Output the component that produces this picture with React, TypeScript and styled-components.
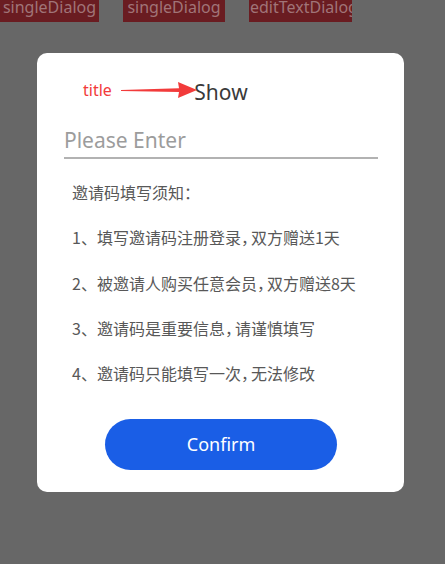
import React from "react";
import styled, { createGlobalStyle } from "styled-components";

const Global = createGlobalStyle`
  html, body {
    margin: 0;
    padding: 0;
    background: #676767;
    height: 100%;
    overflow: hidden;
  }
  body {
    font-family: "Noto Sans", "Noto Sans CJK SC", sans-serif;
  }
`;

const Page = styled.div`
  width: 445px;
  height: 564px;
  background: #676767;
  display: flex;
  flex-direction: column;
`;

const TopBar = styled.div`
  display: flex;
  gap: 24px;
  height: 22px;
`;

const TopButton = styled.div<{ $w: number; $align: string }>`
  width: ${(p) => p.$w}px;
  height: 22px;
  background: #6a1c21;
  color: #a07478;
  font-size: 16px;
  line-height: 14px;
  overflow: hidden;
  white-space: nowrap;
  text-align: ${(p) => p.$align};
  padding: 0 1px;
  box-sizing: border-box;
`;

const Dialog = styled.div`
  margin: 31px 0 0 37px;
  width: 367px;
  background: #ffffff;
  border-radius: 10px;
  padding: 25px 26px 22px 27px;
  box-sizing: border-box;
  display: flex;
  flex-direction: column;
`;

const TitleRow = styled.div`
  position: relative;
  height: 28px;
  display: flex;
  justify-content: center;
  align-items: center;
`;

const Title = styled.div`
  font-size: 21px;
  line-height: 28px;
  color: #3a3a3a;
`;

const Annotation = styled.div`
  position: absolute;
  left: 19px;
  top: -2px;
  height: 28px;
  display: flex;
  align-items: center;
`;

const AnnoText = styled.span`
  color: #f23b3b;
  font-size: 16px;
  line-height: 28px;
`;

const Arrow = styled.svg`
  display: block;
  margin-left: 9px;
`;

const Input = styled.input`
  margin-top: 17px;
  height: 36px;
  border: none;
  border-bottom: 2px solid #b2b2b2;
  padding: 0;
  font-family: "Noto Sans", sans-serif;
  font-size: 21px;
  line-height: 36px;
  color: #333;
  background: transparent;
  outline: none;
  box-sizing: border-box;
  width: 100%;
  &::placeholder {
    color: #9c9c9c;
  }
`;

const Notice = styled.div`
  margin-top: 11px;
  padding-left: 8px;
  display: flex;
  flex-direction: column;
`;

const NoticeLine = styled.div`
  font-family: "Noto Sans CJK SC", "Noto Sans", sans-serif;
  font-size: 16px;
  line-height: 45.25px;
  color: #585858;
  white-space: nowrap;
`;

const Comma = styled.span`
  font-feature-settings: "halt" 1;
  margin-right: 2px;
`;

const ConfirmButton = styled.button`
  margin: 23px 0 0 41px;
  width: 232px;
  height: 51px;
  border: none;
  border-radius: 26px;
  background: #1a5ee6;
  color: #ffffff;
  font-family: "Noto Sans", sans-serif;
  font-size: 18px;
  line-height: 49px;
  cursor: pointer;
  padding: 0;
`;

const lines = [
  "邀请码填写须知：",
  "1、填写邀请码注册登录，双方赠送1天",
  "2、被邀请人购买任意会员，双方赠送8天",
  "3、邀请码是重要信息，请谨慎填写",
  "4、邀请码只能填写一次，无法修改",
];

function renderLine(l: string) {
  const parts = l.split("，");
  return parts.map((p, i) => (
    <React.Fragment key={i}>
      {p}
      {i < parts.length - 1 && <Comma>，</Comma>}
    </React.Fragment>
  ));
}

export default function App() {
  return (
    <>
      <Global />
      <Page>
        <TopBar>
          <TopButton $w={99} $align="center">singleDialog</TopButton>
          <TopButton $w={102} $align="center">singleDialog</TopButton>
          <TopButton $w={103} $align="left">editTextDialog</TopButton>
        </TopBar>
        <Dialog>
          <TitleRow>
            <Annotation>
              <AnnoText>title</AnnoText>
              <Arrow width="78" height="18" viewBox="0 0 78 18">
                <polygon
                  points="0,9 58,7.2 57,1 76,9 57,17 58,11 0,10"
                  fill="#f23b3b"
                />
              </Arrow>
            </Annotation>
            <Title>Show</Title>
          </TitleRow>
          <Input placeholder="Please Enter" />
          <Notice>
            {lines.map((l) => (
              <NoticeLine key={l}>{renderLine(l)}</NoticeLine>
            ))}
          </Notice>
          <ConfirmButton>Confirm</ConfirmButton>
        </Dialog>
      </Page>
    </>
  );
}
